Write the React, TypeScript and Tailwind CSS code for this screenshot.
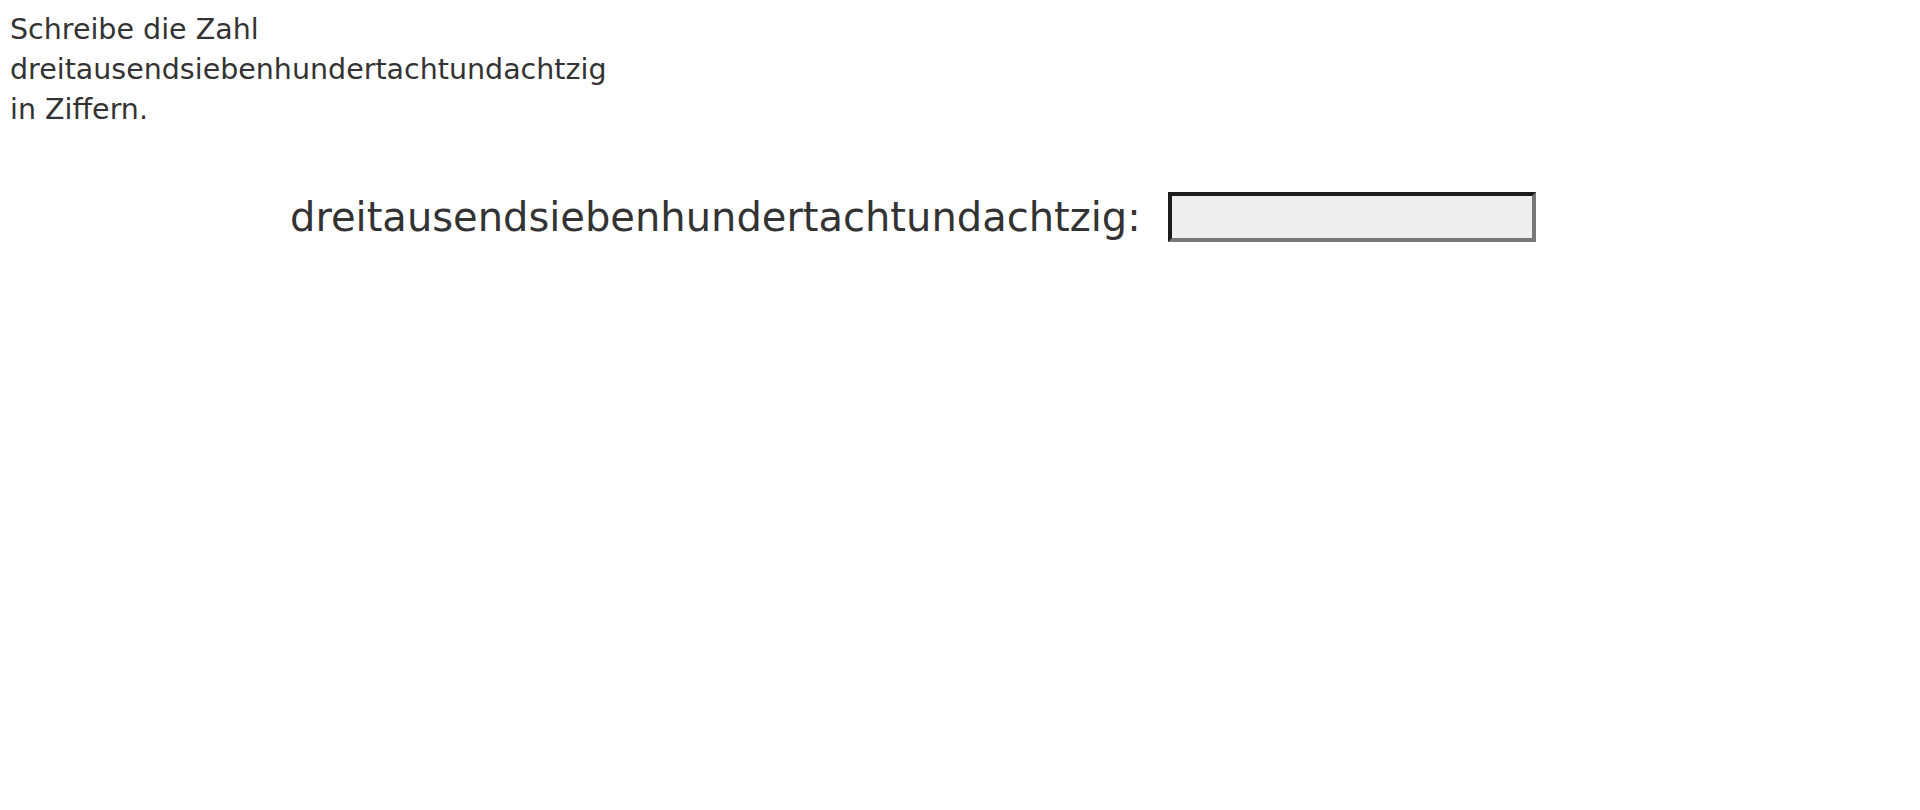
import React from "react";

export default function App() {
  return (
    <div className="min-h-[810px] w-full bg-white text-[#333333]" style={{ fontFamily: '"DejaVu Sans", Verdana, sans-serif' }}>
      <div className="pl-[10px] pt-[10px] text-[28.5px] leading-[40px]">
        <div>Schreibe die Zahl</div>
        <div>dreitausendsiebenhundertachtundachtzig</div>
        <div>in Ziffern.</div>
      </div>
      <div className="mt-[62px] ml-[290px] flex items-center gap-[27px]">
        <label className="text-[40px] leading-[50px]">dreitausendsiebenhundertachtundachtzig:</label>
        <input
          type="text"
          className="h-[50px] w-[368px] border-[4px] border-solid border-t-[#1c1c1c] border-l-[#1c1c1c] border-b-[#777777] border-r-[#777777] bg-[#eeeeee] outline-none"
        />
      </div>
    </div>
  );
}
